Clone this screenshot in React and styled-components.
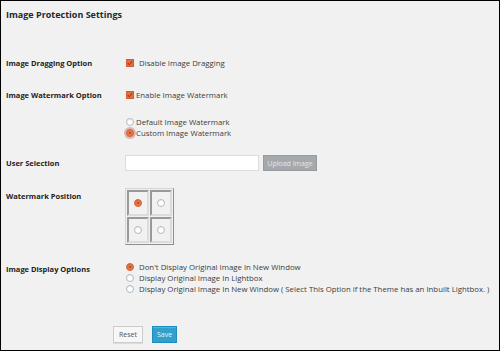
import React from "react";
import styled, { createGlobalStyle } from "styled-components";

const Global = createGlobalStyle`
  html, body { margin: 0; padding: 0; background: #f1f1f1; }
  body { font-family: "Open Sans", "Liberation Sans", sans-serif; }
`;

const Page = styled.div`
  width: 500px;
  height: 351px;
  box-sizing: border-box;
  border: 1px solid #000;
  background: #f1f1f1;
  padding: 0 5px;
  overflow: hidden;
`;

const Title = styled.h2`
  margin: 7px 0 0;
  font-size: 9px;
  line-height: 14px;
  font-weight: 700;
  color: #23282d;
`;

const Row = styled.div`
  display: flex;
  align-items: ${p => (p.top ? "flex-start" : "center")};
  margin-top: ${p => p.mt}px;
`;

const Label = styled.div`
  width: 119px;
  flex: none;
  font-size: 7.5px;
  line-height: 12px;
  font-weight: 700;
  color: #222;
  padding-top: ${p => p.pt || 0}px;
`;

const Options = styled.div`
  display: flex;
  flex-direction: column;
`;

const Option = styled.label`
  display: flex;
  align-items: center;
  height: 11px;
  font-size: 7.8px;
  color: #3c3c3c;
  white-space: nowrap;
`;

const Check = styled.span`
  width: 6px;
  height: 6px;
  margin: 0 ${p => p.gap}px 0 1px;
  background: #e2703f;
  border: 1px solid #cf6033;
  display: inline-flex;
  align-items: center;
  justify-content: center;
`;

const Radio = styled.span`
  width: 6px;
  height: 6px;
  border-radius: 50%;
  margin: 0 ${p => p.gap || 4}px 0 1px;
  background: ${p => (p.on ? "#e8744a" : "#fff")};
  border: 1px solid ${p => (p.on ? "#d4643a" : "#b4b9be")};
  box-shadow: ${p => (p.focus ? "0 0 0 2px #d8b8b0" : "inset 0 1px 1px rgba(0,0,0,0.08)")};
  display: inline-flex;
  align-items: center;
  justify-content: center;
  &::after {
    content: "";
    width: 2px;
    height: 2px;
    border-radius: 50%;
    background: ${p => (p.on ? "#a84420" : "transparent")};
  }
`;

const Input = styled.div`
  width: 132px;
  height: 14px;
  background: #fff;
  border: 1px solid #dcdcdc;
`;

const Upload = styled.button`
  margin-left: 4px;
  width: 54px;
  height: 16px;
  padding: 0;
  background: #a4a9ad;
  border: 1px solid #979b9f;
  color: #e4e6e8;
  font-family: inherit;
  font-size: 7px;
`;

const Grid = styled.div`
  display: grid;
  grid-template-columns: 22px 22px;
  grid-template-rows: 26px 26px;
  gap: 1px;
  padding: 1px;
  border: 1px solid;
  border-color: #d4d4d4 #8e8e8e #8e8e8e #d4d4d4;
`;

const Cell = styled.div`
  box-sizing: border-box;
  border: 2px solid;
  border-color: #999 #dcdcdc #dcdcdc #999;
  display: flex;
  align-items: center;
  justify-content: center;
  & > span { margin: 0; }
`;

const Buttons = styled.div`
  display: flex;
  gap: 9px;
  margin-top: 32px;
  padding-left: 107px;
`;

const Btn = styled.button`
  height: 17px;
  padding: 0 ${p => (p.primary ? 4 : 5)}px;
  font-family: inherit;
  font-size: 7px;
  border: 1px solid ${p => (p.primary ? "#1e8cbe" : "#cccccc")};
  background: ${p => (p.primary ? "#2ea2cc" : "#f7f7f7")};
  color: ${p => (p.primary ? "#e8f5fb" : "#555")};
  box-shadow: ${p => (p.primary ? "inset 0 1px 0 rgba(120,200,230,.5)" : "0 1px 0 #ddd")};
`;

const Tick = () => (
  <svg width="6" height="6" viewBox="0 0 8 8">
    <path d="M1 4.2 L3.2 6.3 L7 1.5" fill="none" stroke="#a8401c" strokeWidth="1.4" />
  </svg>
);

export default function App() {
  return (
    <Page>
      <Global />
      <Title>Image Protection Settings</Title>

      <Row mt={35}>
        <Label>Image Dragging Option</Label>
        <Option>
          <Check gap={5}><Tick /></Check>Disable Image Dragging
        </Option>
      </Row>

      <Row mt={20}>
        <Label>Image Watermark Option</Label>
        <Option>
          <Check gap={2}><Tick /></Check>Enable Image Watermark
        </Option>
      </Row>

      <Row mt={15}>
        <Label />
        <Options>
          <Option><Radio gap={2} />Default Image Watermark</Option>
          <Option><Radio gap={2} on focus />Custom Image Watermark</Option>
        </Options>
      </Row>

      <Row mt={17}>
        <Label>User Selection</Label>
        <Input />
        <Upload>Upload Image</Upload>
      </Row>

      <Row mt={17} top>
        <Label pt={2}>Watermark Position</Label>
        <Grid>
          <Cell><Radio on /></Cell>
          <Cell><Radio /></Cell>
          <Cell><Radio /></Cell>
          <Cell><Radio /></Cell>
        </Grid>
      </Row>

      <Row mt={16} top>
        <Label pt={2}>Image Display Options</Label>
        <Options>
          <Option><Radio gap={5} on />Don't Display Original Image In New Window</Option>
          <Option><Radio gap={5} />Display Original Image In Lightbox</Option>
          <Option><Radio gap={5} />Display Original Image In New Window ( Select This Option if the Theme has an Inbuilt Lightbox. )</Option>
        </Options>
      </Row>

      <Buttons>
        <Btn>Reset</Btn>
        <Btn primary>Save</Btn>
      </Buttons>
    </Page>
  );
}
